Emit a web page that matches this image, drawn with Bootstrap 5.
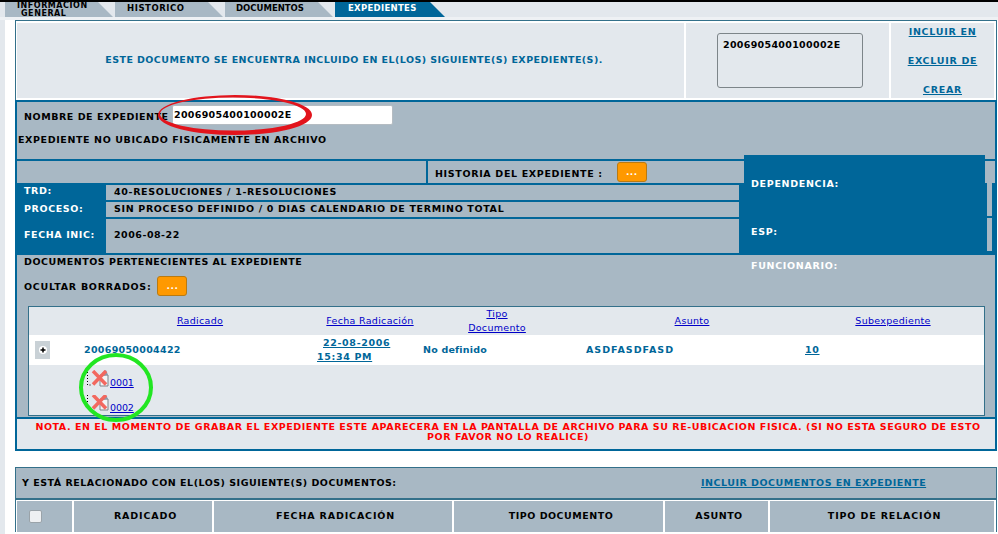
<!DOCTYPE html>
<html lang="es">
<head>
<meta charset="utf-8">
<title>Expedientes</title>
<link href="https://cdn.jsdelivr.net/npm/bootstrap@5.3.0/dist/css/bootstrap.min.css" rel="stylesheet">
<style>
html,body{height:534px;overflow:hidden}
body{position:relative;background:#fff;font-family:"DejaVu Sans",Verdana,sans-serif;font-size:9.5px;font-weight:700;line-height:1.15;color:#000;letter-spacing:.5px;border-top:2px solid #000;margin:0}
a{color:#00009c}
.tabbar{height:18px;background:linear-gradient(to bottom,#e3e8ed 15px,#eef1f4 15px);padding-left:5px;gap:2px}
.tabitem{width:108px;height:15px;background:#a8b8c4;clip-path:polygon(0 0,93px 0,100% 100%,0 100%);font-size:8.5px;padding-top:2px;letter-spacing:0}
.tabitem.tab-one{font-size:8px;line-height:8px;padding-left:12px;padding-top:0;letter-spacing:.55px;overflow:hidden}
.tab-one span{display:inline-block;margin-left:4px}
.tabitem.tab-hist{padding-left:12px;letter-spacing:.55px}
.tabitem.tab-docs{padding-left:11px}
.tabitem.tab-on{width:110px;background:#006699;color:#fff;clip-path:polygon(0 0,95px 0,100% 100%,0 100%);padding-left:13px;letter-spacing:.3px}
.pagewrap{padding-left:15px;background:linear-gradient(to right,#e3e8ed 5px,#fff 5px);height:514px}
.topbox{width:982px;height:80px;border:1px solid #33708a;border-bottom:0;background:#fff;gap:2px;padding:2px 2px 2px 1px}
.topbox>div{background:#e3e8ed}
.msgcell{width:667px;color:#006699;letter-spacing:.43px;padding-left:7px}
.boxcell{width:203px;padding:10px 0 0 31px}
.fakearea{width:146px;height:55px;border:1px solid #7d8589;border-radius:3px;padding:6px 5px;letter-spacing:.31px}
.linkcell{width:103px;gap:18.500px;padding-top:2px}
.linkcell a{color:#006699;letter-spacing:.72px}
.mainbox{width:982px;height:351px;border:2px solid #006699;background:#a8b8c4}
.namerow{height:59px;border-bottom:2px solid #006699}
.nameline{padding:3px 0 0 7px;height:23px}
.namelabel{width:148px;white-space:nowrap;padding-top:7px;letter-spacing:.55px}
.nameinput{width:221px;height:20px;background:#fff;border:1px solid #b5bcc2;border-radius:2px;padding:4px 1px;letter-spacing:.31px}
.notfound{padding:10px 0 0 1px;letter-spacing:.61px}
.histrow{height:24px;border-bottom:2px solid #006699}
.histleft{width:411px;border-right:2px solid #006699}
.histright{padding-left:7px;gap:14px}
.histtext{margin-top:4px;letter-spacing:.66px}
.orangebtn{width:30px;height:20px;background:#f90;border:1px solid #b97a12;border-radius:3px;color:#fff;font-size:9px;line-height:14px;padding:0;display:flex;align-items:center;justify-content:center}
.datagrid{display:grid;grid-template-columns:89px 1fr;grid-template-rows:17px 17px 34px;height:70px;border-bottom:2px solid #006699}
.dlabel{background:#006699;color:#fff;padding:0 0 2px 7px;display:flex;align-items:center;letter-spacing:.6px}
.dlabel.dfirst{margin-top:-2px;position:relative}
.dvalue{padding-left:8px;display:flex;align-items:center;border-bottom:2px solid #006699;letter-spacing:.66px}
.dvalue.last{border-bottom:0;letter-spacing:.5px;padding-bottom:2px}
.docsrow{padding:2px 0 0 7px;height:51px}
.docstitle{letter-spacing:.52px}
.hideline{padding-top:8px;gap:6px}
.hidetext{margin-top:4px;letter-spacing:.74px}
.innerbox{margin:0 10px 0 11px;height:110px;border:1px solid #33708a;background:#e3e8ed;font-weight:400;letter-spacing:.3px}
.innerhead{height:28px;display:grid;grid-template-columns:50px 242px 98px 156px 234px 168px;text-align:center;align-items:center;line-height:14px}
.innerbody{height:30px;background:#fff;display:grid;grid-template-columns:55px 233px 106px 163px 219px 1fr;align-items:center;font-weight:700;color:#006699;letter-spacing:.65px}
.innerbox a{color:#0000c8}
.innerbody a{color:#006699}
.rad-cell{letter-spacing:.3px}
.date-cell{line-height:14px}
.date-first{margin-left:6px}
.nodef-cell{letter-spacing:.2px}
.asunto-cell{letter-spacing:1px}
.plusbox{width:15px;height:18px;background:#c9d1d6;margin-left:6px;display:flex;align-items:center;justify-content:center}
.subrows{padding:5px 0 0 58px;font-weight:400;letter-spacing:-.1px;line-height:11px}
.subitem{height:18px;margin-bottom:7px;align-items:flex-end}
.noterow{height:32px;margin-top:1px;background:#e3e8ed;border-top:2px solid #006699;color:#f00;text-align:center;padding:3px 0 0 4px;line-height:10px;letter-spacing:.55px;white-space:nowrap}
.relbox{width:982px;margin-top:16px;border:1px solid #33708a;border-bottom:0}
.relhead{height:32px;background:#a8b8c4;border-bottom:2px solid #33708a;padding:0 0 0 6px;align-items:center}
.relhead a{color:#006699}
.reltitle{width:679px}
.relcols{display:grid;grid-template-columns:55px 138px 238px 209px 103px 224px;gap:2px;padding:1px 0 0 1px}
.relcols>div{height:31px;background:#a8b8c4;display:flex;align-items:center;justify-content:center;padding-left:5px}
.relcols>.checkcell{justify-content:flex-start;padding-left:12px}
.relcols .spread{letter-spacing:.85px}
.fakecheck{width:13px;height:13px;background:#eef0f2;border:1px solid #9aa3a9;border-radius:2px}
.floatpanel{position:absolute;left:744px;top:153px;width:241px;height:100px;background:#006699}
.floatwide{position:absolute;left:739px;top:181px;width:248px;height:72px;background:#006699}
.edgeblock{position:absolute;left:987px;top:181px;width:8px;height:72px;background:#006699;padding-right:3px;display:flex;flex-direction:column;gap:2px}
.edgeblock i{display:block;background:#a8b8c4;height:33px}
.floattext{position:absolute;left:751px;color:#fff;letter-spacing:.68px}
.ftop{top:177px}.fmid{top:225px}.flow{top:259px}
.marks{position:absolute;left:0;top:-2px;width:998px;height:534px;pointer-events:none}
.xicon{display:block}
</style>
</head>
<body>
<div class="tabbar d-flex">
  <div class="tabitem tab-one">INFORMACIÓN<br><span>GENERAL</span></div>
  <div class="tabitem tab-hist">HISTORICO</div>
  <div class="tabitem tab-docs">DOCUMENTOS</div>
  <div class="tabitem tab-on">EXPEDIENTES</div>
</div>
<div class="pagewrap">
  <div class="topbox d-flex">
    <div class="msgcell d-flex align-items-center justify-content-center">ESTE DOCUMENTO SE ENCUENTRA INCLUIDO EN EL(LOS) SIGUIENTE(S) EXPEDIENTE(S).</div>
    <div class="boxcell"><div class="fakearea">2006905400100002E</div></div>
    <div class="linkcell d-flex flex-column align-items-center justify-content-center">
      <a href="#">INCLUIR EN</a><a href="#">EXCLUIR DE</a><a href="#">CREAR</a>
    </div>
  </div>
  <div class="mainbox">
    <div class="namerow">
      <div class="nameline d-flex align-items-start"><div class="namelabel">NOMBRE DE EXPEDIENTE</div><div class="nameinput">2006905400100002E</div></div>
      <div class="notfound">EXPEDIENTE NO UBICADO FISICAMENTE EN ARCHIVO</div>
    </div>
    <div class="histrow d-flex">
      <div class="histleft"></div>
      <div class="histright d-flex align-items-center"><span class="histtext">HISTORIA DEL EXPEDIENTE :</span><div class="orangebtn">...</div></div>
    </div>
    <div class="datagrid">
      <div class="dlabel dfirst">TRD:</div><div class="dvalue">40-RESOLUCIONES / 1-RESOLUCIONES</div>
      <div class="dlabel">PROCESO:</div><div class="dvalue">SIN PROCESO DEFINIDO / 0 DIAS CALENDARIO DE TERMINO TOTAL</div>
      <div class="dlabel">FECHA INIC:</div><div class="dvalue last">2006-08-22</div>
    </div>
    <div class="docsrow">
      <div class="docstitle">DOCUMENTOS PERTENECIENTES AL EXPEDIENTE</div>
      <div class="hideline d-flex align-items-center"><span class="hidetext">OCULTAR BORRADOS:</span><div class="orangebtn">...</div></div>
    </div>
    <div class="innerbox">
      <div class="innerhead">
        <div></div><div><a href="#">Radicado</a></div><div><a href="#">Fecha Radicación</a></div><div><a href="#">Tipo<br>Documento</a></div><div><a href="#">Asunto</a></div><div><a href="#">Subexpediente</a></div>
      </div>
      <div class="innerbody">
        <div><div class="plusbox"><svg width="8" height="8" viewBox="0 0 8 8"><circle cx="4" cy="4" r="4" fill="#fff"/><path d="M1.5 4h5M4 1.5v5" stroke="#000" stroke-width="1.5"/></svg></div></div>
        <div class="rad-cell">20069050004422</div>
        <div class="date-cell"><a class="date-first" href="#">22-08-2006</a><br><a href="#">15:34 PM</a></div>
        <div class="nodef-cell">No definido</div>
        <div class="asunto-cell">ASDFASDFASD</div>
        <div><a href="#">10</a></div>
      </div>
      <div class="subrows">
        <div class="subitem d-flex"><svg class="xicon" width="23" height="18" viewBox="0 0 23 18"><path d="M.5 2v13H5" fill="none" stroke="#000" stroke-dasharray="1 2"/><path d="M13 5h8v11h-8z" fill="#f2f4f5" stroke="#7b8389"/><path d="M15 3l4-3 2 5-5 1z" fill="#8c98a8"/><path d="M6 1l13 13.500M19 1L6 14.500" stroke="#f2685f" stroke-width="3.500"/></svg><a href="#">0001</a></div>
        <div class="subitem d-flex"><svg class="xicon" width="23" height="18" viewBox="0 0 23 18"><path d="M.5 0v10" fill="none" stroke="#000" stroke-dasharray="1 2"/><path d="M13 4h8v11h-8z" fill="#f2f4f5" stroke="#7b8389"/><path d="M15 2l4-2 2 4-5 1z" fill="#8c98a8"/><path d="M6 0l13 13.500M19 0L6 13.500" stroke="#f2685f" stroke-width="3.500"/></svg><a href="#">0002</a></div>
      </div>
    </div>
    <div class="noterow">NOTA. EN EL MOMENTO DE GRABAR EL EXPEDIENTE ESTE APARECERA EN LA PANTALLA DE ARCHIVO PARA SU RE-UBICACION FISICA. (SI NO ESTA SEGURO DE ESTO<br>POR FAVOR NO LO REALICE)</div>
  </div>
  <div class="relbox">
    <div class="relhead d-flex"><div class="reltitle">Y ESTÁ RELACIONADO CON EL(LOS) SIGUIENTE(S) DOCUMENTOS:</div><a href="#">INCLUIR DOCUMENTOS EN EXPEDIENTE</a></div>
    <div class="relcols">
      <div class="checkcell"><span class="fakecheck"></span></div><div class="spread">RADICADO</div><div class="spread">FECHA RADICACIÓN</div><div>TIPO DOCUMENTO</div><div>ASUNTO</div><div class="spread">TIPO DE RELACIÓN</div>
    </div>
  </div>
</div>
<div class="floatpanel"></div>
<div class="floatwide"></div>
<div class="edgeblock"><i></i><i></i></div>
<div class="floattext ftop">DEPENDENCIA:</div>
<div class="floattext fmid">ESP:</div>
<div class="floattext flow">FUNCIONARIO:</div>
<svg class="marks" viewBox="0 0 998 534">
  <path fill="#e2141c" fill-rule="evenodd" d="M158 115a77 20 0 1 0 154 0a77 20 0 1 0-154 0zM160 114a73 16.500 0 1 1 146 0a73 16.500 0 1 1-146 0z"/>
  <ellipse cx="116" cy="387.500" rx="35" ry="32.500" fill="none" stroke="#22e622" stroke-width="4"/>
</svg>
</body>
</html>
